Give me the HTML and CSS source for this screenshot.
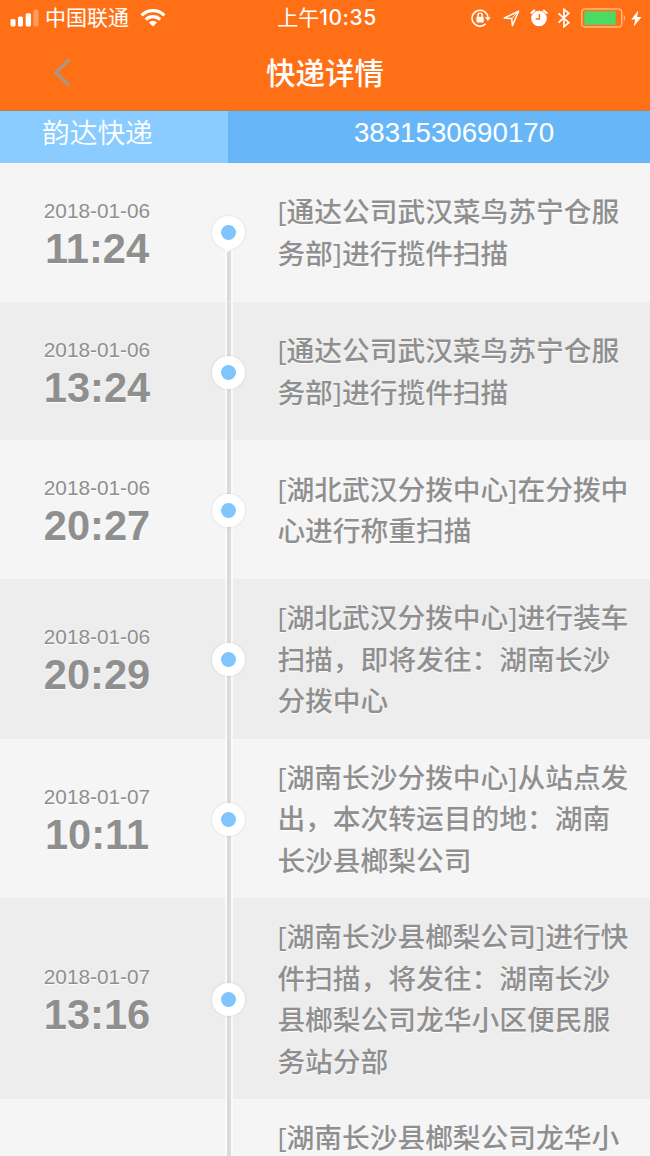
FILE: index.html
```html
<!DOCTYPE html>
<html lang="zh-CN">

<head>
    <meta charset="UTF-8">
    <meta name="viewport" content="width=device-width, initial-scale=1.0">
    <title>快递详情</title>
    <link rel="stylesheet" href="styles.css">
</head>

<body>
    <div class="page">
        <header class="header">
            <div class="status-bar">
                <div class="status-left">
                    <svg class="signal" width="30" height="18" viewBox="0 0 30 18" fill="#fff">
                        <rect x="0.5" y="10" width="5" height="7.5" rx="1.5"/>
                        <rect x="8" y="7.5" width="5" height="10" rx="1.5"/>
                        <rect x="15.7" y="4.2" width="5.3" height="13.3" rx="1.5"/>
                        <rect x="23.3" y="0.5" width="5.2" height="17" rx="1.5" opacity="0.3"/>
                    </svg>
                    <span>中国联通</span>
                    <svg class="wifi" width="26" height="18" viewBox="0 0 26 18" fill="none" stroke="#fff" stroke-width="3.2">
                        <path d="M1.6 6.3a16.2 16.2 0 0 1 22.8 0"/>
                        <path d="M5.8 10.6a10.2 10.2 0 0 1 14.4 0"/>
                        <path d="M13 17.4l-4.1-4a5.8 5.8 0 0 1 8.2 0z" fill="#fff" stroke="none"/>
                    </svg>
                </div>
                <div class="status-time">上午<b>10:35</b></div>
                <div class="status-right">
                    <svg width="20" height="18" viewBox="0 0 20 18">
                        <path d="M14.7 14.9A8 8 0 1 1 17 8.5" fill="none" stroke="#fff" stroke-width="1.5"/>
                        <path d="M13.9 8.2h6l-3 3.8z" fill="#fff"/>
                        <rect x="5.5" y="7.8" width="7.2" height="5.6" rx="0.8" fill="#fff"/>
                        <path d="M7 8V6.2a2.1 2.1 0 0 1 4.2 0V8" fill="none" stroke="#fff" stroke-width="1.4"/>
                    </svg>
                    <svg class="arrow" width="17" height="17" viewBox="0 0 17 17">
                        <path d="M1.3 8L15.6 1.2 9.4 15.6 8.7 8.6z" fill="none" stroke="#fff" stroke-width="1.5" stroke-linejoin="round"/>
                        <path d="M15.6 1.2L8.7 8.6" stroke="#fff" stroke-width="1"/>
                    </svg>
                    <svg class="alarm" width="18" height="18" viewBox="0 0 18 18">
                        <circle cx="9" cy="9.5" r="7.8" fill="#fff"/>
                        <path d="M0.8 4.5l4-3.6M17.2 4.5l-4-3.6" stroke="#fff" stroke-width="2"/>
                        <path d="M9.4 5v5H5.6" fill="none" stroke="#ff7016" stroke-width="1.4"/>
                    </svg>
                    <svg class="bluetooth" width="14" height="20" viewBox="0 0 14 20">
                        <path d="M1.5 5.3l10.3 9.3L7 18.6V1.4l4.8 4L1.5 14.7" fill="none" stroke="#fff" stroke-width="1.7"/>
                    </svg>
                    <svg class="battery" width="46" height="20" viewBox="0 0 46 20">
                        <rect x="0.7" y="0.9" width="40" height="18.2" rx="3.4" fill="none" stroke="#ffb684" stroke-width="1.5"/>
                        <rect x="3.3" y="3.3" width="31.5" height="13.4" rx="0.8" fill="#4cd964"/>
                        <path d="M42.8 6.8q2.8 3.2 0 6.4z" fill="#ffb684"/>
                    </svg>
                    <svg class="bolt" width="11" height="17" viewBox="0 0 11 17">
                        <path d="M7.2 0.5L0.3 9.5h3.8L2.8 16.5 10.6 7H6.2z" fill="#fff"/>
                    </svg>
                </div>
            </div>
            <div class="nav-bar">
                <svg class="back" width="18" height="30" viewBox="0 0 18 30">
                    <path d="M16.5 1.5L2.8 14.5 16.5 27.5" fill="none" stroke="#ab9784" stroke-width="3.2"/>
                </svg>
                <h1>快递详情</h1>
            </div>
        </header>

        <div class="express">
            <div class="company">韵达快递</div>
            <div class="number">3831530690170</div>
        </div>

        <ul class="timeline">
            <li>
                <div class="when"><span class="date">2018-01-06</span><span class="time">11:24</span></div>
                <div class="axis first"><i class="dot"></i></div>
                <p>[通达公司武汉菜鸟苏宁仓服务部]进行揽件扫描</p>
            </li>
            <li>
                <div class="when"><span class="date">2018-01-06</span><span class="time">13:24</span></div>
                <div class="axis"><i class="dot"></i></div>
                <p>[通达公司武汉菜鸟苏宁仓服务部]进行揽件扫描</p>
            </li>
            <li>
                <div class="when"><span class="date">2018-01-06</span><span class="time">20:27</span></div>
                <div class="axis"><i class="dot"></i></div>
                <p>[湖北武汉分拨中心]在分拨中心进行称重扫描</p>
            </li>
            <li>
                <div class="when"><span class="date">2018-01-06</span><span class="time">20:29</span></div>
                <div class="axis"><i class="dot"></i></div>
                <p>[湖北武汉分拨中心]进行装车扫描，即将发往：湖南长沙分拨中心</p>
            </li>
            <li>
                <div class="when"><span class="date">2018-01-07</span><span class="time">10:11</span></div>
                <div class="axis"><i class="dot"></i></div>
                <p>[湖南长沙分拨中心]从站点发出，本次转运目的地：湖南长沙县榔梨公司</p>
            </li>
            <li>
                <div class="when"><span class="date">2018-01-07</span><span class="time">13:16</span></div>
                <div class="axis"><i class="dot"></i></div>
                <p>[湖南长沙县榔梨公司]进行快件扫描，将发往：湖南长沙县榔梨公司龙华小区便民服务站分部</p>
            </li>
            <li class="last">
                <div class="when"></div>
                <div class="axis"></div>
                <p>[湖南长沙县榔梨公司龙华小</p>
            </li>
        </ul>
    </div>
</body>

</html>
```
FILE: styles.css
```css
* {
    box-sizing: border-box;
}

body {
    margin: 0;
    font-family: "Liberation Sans", "Noto Sans CJK SC", sans-serif;
    background-color: #f5f5f5;
}

.page {
    width: 650px;
    height: 1156px;
    overflow: hidden;
    display: flex;
    flex-direction: column;
}

.header {
    flex: none;
    height: 111px;
    background-color: #ff7016;
    border-bottom: 1px solid #b9804f;
    color: #fff;
}

.status-bar {
    display: grid;
    grid-template-columns: 1fr auto 1fr;
    align-items: center;
    height: 36px;
    padding: 0 8px 0 10px;
    font-size: 21px;
}

.status-left,
.status-right {
    display: flex;
    align-items: center;
}

.status-left span {
    margin-left: 5px;
    line-height: 30px;
}

.wifi {
    margin-left: 11px;
}

.status-time {
    padding-left: 2px;
    line-height: 30px;
}

.status-time b {
    font-family: Inter, sans-serif;
    font-size: 21px;
    font-weight: 500;
    letter-spacing: 0.5px;
}

.status-right {
    justify-content: flex-end;
}

.arrow {
    margin-left: 12px;
}

.alarm {
    margin-left: 10px;
}

.bluetooth {
    margin-left: 9px;
}

.battery {
    margin-left: 10px;
}

.bolt {
    margin-left: 4px;
}

.nav-bar {
    display: grid;
    grid-template-columns: 1fr auto 1fr;
    align-items: center;
    height: 74px;
}

.back {
    margin-left: 53px;
}

.nav-bar h1 {
    margin: 0;
    padding-top: 1px;
    font-size: 29.5px;
    font-weight: 500;
    line-height: 44px;
}

.express {
    flex: none;
    display: flex;
    height: 52px;
    color: #fff;
    font-size: 27.7px;
    line-height: 44px;
}

.company {
    width: 228px;
    padding-left: 42px;
    padding-top: 1px;
    background-color: #8accff;
    font-weight: 350;
}

.number {
    flex: 1;
    padding-left: 30px;
    background-color: #67b7f8;
    text-align: center;
}

.timeline {
    margin: 0;
    padding: 0;
    list-style: none;
}

.timeline li {
    display: flex;
    align-items: center;
    min-height: 138.7px;
    background-color: #f5f5f5;
    color: #8f8f8f;
    text-shadow: 0 1px 1px #fff;
}

.timeline li:nth-child(even) {
    background-color: #ededed;
}

.when {
    width: 212px;
    padding: 3px 61px 0 43px;
}

.date,
.time {
    display: block;
    text-align: center;
}

.date {
    font-size: 20.8px;
    line-height: 30px;
}

.time {
    font-size: 41.6px;
    font-weight: bold;
    line-height: 46px;
}

/* vertical line with the dot in the middle of the row */
.axis {
    display: flex;
    align-items: center;
    justify-content: center;
    align-self: stretch;
    width: 33px;
    padding-top: 2px;
    background: linear-gradient(to right, #fafafa 2px, #d9d9d7 2px, #dededc 6px, #fafafa 6px) center / 8px 100% no-repeat;
}

.axis.first {
    padding-top: 1px;
    background-size: 8px 50%;
    background-position: bottom;
}

.dot {
    width: 33px;
    height: 33px;
    border: 9px solid #fff;
    border-radius: 50%;
    background-color: #80c5fd;
    box-shadow: 0 0 3px rgba(0, 0, 0, 0.12);
}

/* the line starts under the first dot, which ends in a small tip */
.axis.first .dot {
    position: relative;
}

.axis.first .dot::after {
    content: "";
    position: absolute;
    left: -1px;
    top: 20px;
    border: 8.5px solid transparent;
    border-top: 7px solid #fff;
    border-bottom: 0;
}

.timeline p {
    width: 356px;
    margin: 0 0 0 32.4px;
    padding: 18px 0 16.7px;
    font-family: "Open Sans", "Noto Sans CJK SC", sans-serif;
    font-size: 27.74px;
    font-weight: 500;
    line-height: 41.6px;
}

.timeline .last {
    align-items: flex-start;
    height: 201px;
}
```
